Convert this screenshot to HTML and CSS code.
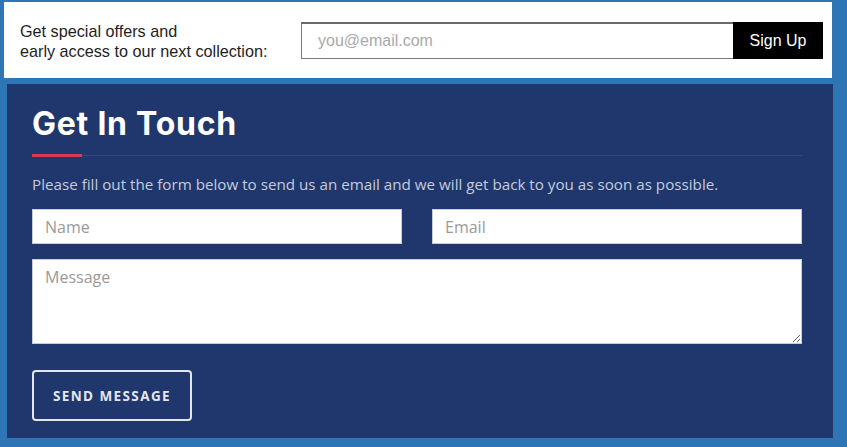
FILE: index.html
```html
<!DOCTYPE html>
<html lang="en">
<head>
<meta charset="utf-8">
<title>Get In Touch</title>
<link rel="stylesheet" href="styles.css">
</head>
<body>
<div class="page">
  <section class="promo">
    <p class="promo-text">Get special offers and<br>early access to our next collection:</p>
    <form class="promo-form">
      <input class="promo-input" type="email" placeholder="you@email.com">
      <button class="promo-btn" type="button">Sign Up</button>
    </form>
  </section>
  <section class="panel">
    <h2 class="title">Get In Touch</h2>
    <div class="rule"><span class="rule-accent"></span></div>
    <p class="lead">Please fill out the form below to send us an email and we will get back to you as soon as possible.</p>
    <form class="contact">
      <div class="row">
        <input class="field" type="text" placeholder="Name">
        <input class="field" type="email" placeholder="Email">
      </div>
      <textarea class="field area" placeholder="Message"></textarea>
      <button class="send" type="button">SEND MESSAGE</button>
    </form>
  </section>
</div>
</body>
</html>
```

FILE: styles.css
```css
html, body {
  margin: 0;
  padding: 0;
}
body {
  background: #2e75b6;
  width: 847px;
  height: 447px;
  overflow: hidden;
}
.page {
  padding: 2px 0 0 4px;
}
.promo {
  box-sizing: border-box;
  width: 828px;
  height: 76px;
  background: #fff;
  display: flex;
  align-items: center;
  padding: 0 9px 0 16px;
}
.promo-text {
  margin: 0;
  font-family: "Liberation Sans", Arial, sans-serif;
  font-size: 16.2px;
  line-height: 20px;
  color: #1e1e1e;
  width: 281px;
  flex: none;
  padding-top: 1px;
}
.promo-form {
  display: flex;
  flex: 1;
  height: 37px;
  margin-top: 1px;
}
.promo-input {
  flex: 1;
  box-sizing: border-box;
  height: 37px;
  border: 1px solid #7a7a7a;
  border-top: 2px solid #6a6a6a;
  border-right: none;
  padding: 0 16px;
  font-family: "Liberation Sans", Arial, sans-serif;
  font-size: 16px;
  outline: none;
}
.promo-input::placeholder {
  color: #a9a9a9;
}
.promo-btn {
  width: 90px;
  height: 37px;
  border: none;
  background: #000;
  color: #fff;
  font-family: "Liberation Sans", Arial, sans-serif;
  font-size: 16px;
  padding: 0;
}
.panel {
  box-sizing: border-box;
  margin: 6px 0 0 3px;
  width: 826px;
  height: 354px;
  background: #1f376d;
  padding: 20px 31px 0 25px;
}
.title {
  margin: 0;
  font-family: "Inter", "Open Sans", sans-serif;
  font-weight: 700;
  font-size: 32px;
  line-height: 40px;
  color: #fff;
  letter-spacing: 0.75px;
}
.rule {
  margin-top: 11px;
  height: 1px;
  background: #33497c;
  position: relative;
}
.rule-accent {
  position: absolute;
  left: 0;
  top: -1px;
  width: 50px;
  height: 3px;
  background: #d43c4b;
}
.lead {
  margin: 18px 0 0;
  font-family: "Open Sans", sans-serif;
  font-size: 15.2px;
  line-height: 20px;
  color: #c5cbdc;
}
.contact {
  margin-top: 15px;
  display: flex;
  flex-direction: column;
  align-items: flex-start;
}
.row {
  display: flex;
  gap: 30px;
  width: 100%;
}
.field {
  box-sizing: border-box;
  flex: 1;
  height: 35px;
  border: 1px solid #c8ccd6;
  background: #fff;
  padding: 0 12px;
  font-family: "Open Sans", sans-serif;
  font-size: 16px;
  outline: none;
  margin: 0;
}
.field::placeholder {
  color: #9a9a9a;
}
.area {
  display: block;
  width: 100%;
  height: 85px;
  margin-top: 15px;
  padding: 6px 12px;
  resize: vertical;
  flex: none;
}
.send {
  margin-top: 26px;
  width: 160px;
  height: 51px;
  border: 2px solid #e3e6ee;
  border-radius: 4px;
  background: transparent;
  color: #e3e6ee;
  font-family: "Open Sans", sans-serif;
  font-weight: 700;
  font-size: 13.5px;
  letter-spacing: 1.4px;
  padding: 0;
}
```
